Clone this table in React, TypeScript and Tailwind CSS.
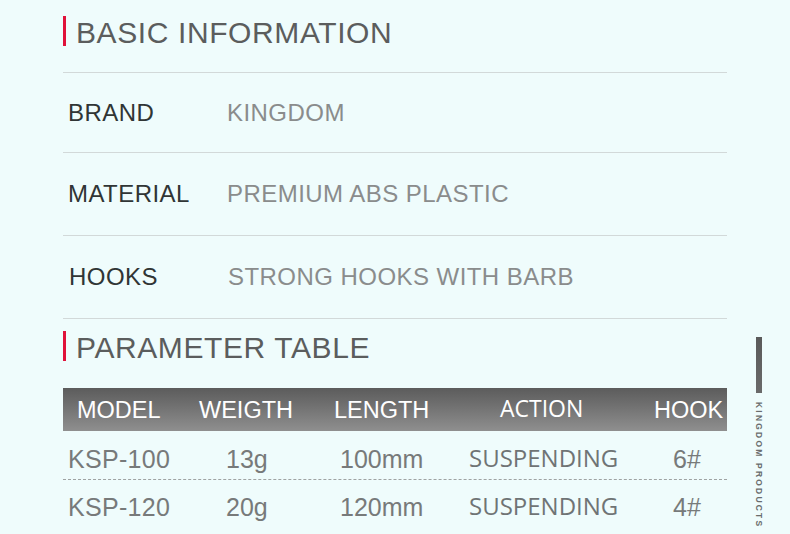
const info = [
  { label: "BRAND", value: "KINGDOM", h: "h-[80px]", lp: "pl-[5px]", vp: "pl-[164px]" },
  { label: "MATERIAL", value: "PREMIUM ABS PLASTIC", h: "h-[83px]", lp: "pl-[5px]", vp: "pl-[164px]" },
  { label: "HOOKS", value: "STRONG HOOKS WITH BARB", h: "h-[83px]", lp: "pl-[6px]", vp: "pl-[165px]" }
];

const rows = [
  { model: "KSP-100", weight: "13g", length: "100mm", action: "SUSPENDING", hook: "6#" },
  { model: "KSP-120", weight: "20g", length: "120mm", action: "SUSPENDING", hook: "4#" }
];

const arial = "font-['Liberation_Sans',Arial,sans-serif]";
const open = "font-['Open_Sans','Noto_Sans',sans-serif]";

const SectionTitle = ({ text }: { text: string }) => (
  <div className="flex items-start gap-[10px]">
    <span className="h-[30px] w-[3px] bg-[#e0123a]" />
    <span className={`${arial} mt-[2px] text-[30px] leading-[30px] tracking-[0.6px] text-[#5b5d5d]`}>
      {text}
    </span>
  </div>
);

const App = () => {
  return (
    <div className="flex h-[534px] w-[790px] overflow-hidden bg-[#effcfc]">
      <div className="ml-[63px] flex w-[664px] flex-col">
        <div className="h-[73px] border-b border-[#d2d9d9] pt-[16px]">
          <SectionTitle text="BASIC INFORMATION" />
        </div>

        {info.map((item) => (
          <div
            key={item.label}
            className={`relative flex ${item.h} items-center border-b border-[#d2d9d9] ${arial} text-[24px] leading-[30px] tracking-[0.45px]`}
          >
            <span className={`${item.lp} text-[#303535]`}>{item.label}</span>
            <span className={`absolute left-0 ${item.vp} text-[#8a8c8c]`}>{item.value}</span>
          </div>
        ))}

        <div className="h-[69px] pt-[12px]">
          <SectionTitle text="PARAMETER TABLE" />
        </div>

        <div className="grid h-[43px] grid-cols-[125px_137px_136px_182px_84px] items-center bg-gradient-to-b from-[#5c5c5c] to-[#8f8f8f] text-[23.5px] leading-[30px] text-white">
          <span className={`${arial} pl-[14px]`}>MODEL</span>
          <span className={`${arial} pl-[11px]`}>WEIGTH</span>
          <span className={`${arial} pl-[9px]`}>LENGTH</span>
          <span className={`${open} -mt-[3px] pl-[39px] text-[23px]`}>ACTION</span>
          <span className={`${arial} pl-[11px]`}>HOOK</span>
        </div>

        {rows.map((r, i) => (
          <div
            key={r.model}
            className={`grid grid-cols-[125px_137px_136px_182px_84px] items-start text-[25px] leading-[30px] text-[#777a7a] ${
              i === 0 ? "h-[49px] border-b border-dashed border-[#9fa3a3] pt-[13px]" : "pt-[12px]"
            }`}
          >
            <span className={`${arial} pl-[5px] tracking-[0.3px]`}>{r.model}</span>
            <span className={`${arial} pl-[38px]`}>{r.weight}</span>
            <span className={`${arial} pl-[15px]`}>{r.length}</span>
            <span className={`${open} -mt-[1px] pl-[8px] text-[24px] text-[#6f7475]`}>{r.action}</span>
            <span className={`${arial} pl-[30px]`}>{r.hook}</span>
          </div>
        ))}
      </div>

      <div className="ml-[29px] flex w-[6px] flex-col items-center pt-[337px]">
        <span className="h-[56px] w-[6px] bg-gradient-to-b from-[#5a5a5a] to-[#6a6a6a]" />
        <span
          className={`${arial} mt-[9px] text-[8.5px] leading-[8px] font-bold tracking-[2.2px] text-[#6a6d6d] [writing-mode:vertical-rl]`}
        >
          KINGDOM PRODUCTS
        </span>
      </div>
    </div>
  );
};

export default App;
